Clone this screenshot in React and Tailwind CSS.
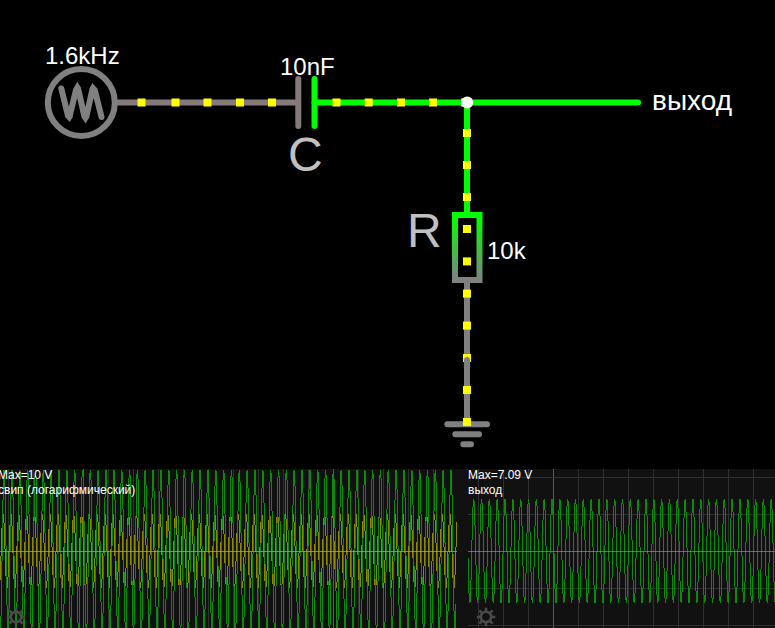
const GREEN = '#00ff00';
const GRAY = '#808080';
const WARM = '#857a7a';

const horizontalDots = [141.5, 175.5, 207.5, 240, 272, 336.5, 368.7, 401, 433];
const verticalDots = [133, 165, 197, 229, 261.4, 293.6, 325.6];

function Dot({ x, y }) {
  return <rect x={x - 4} y={y - 4} width="8" height="8" fill="#ffff00" />;
}

function Circuit() {
  return (
    <main className="relative h-[469px] overflow-hidden leading-none whitespace-nowrap">
      <svg width="775" height="469" viewBox="0 0 775 469" fill="none" strokeWidth="6" strokeLinecap="round" className="block max-w-none">
        <defs>
          <linearGradient id="drop" gradientUnits="userSpaceOnUse" x1="0" y1="212" x2="0" y2="280">
            <stop offset="0.08" stopColor={GREEN} />
            <stop offset="1" stopColor={GRAY} />
          </linearGradient>
        </defs>

        {/* sweep source */}
        <path d="M118 102.5H298" stroke={WARM} />
        <circle cx="81.3" cy="102.5" r="33.5" stroke={GRAY} />
        <path d="M61.3 88.5L67.8 115L69.7 116L76 90L78.4 90L84.3 116L86.5 116L92.5 89L95 91L101.5 117" stroke={GRAY} strokeLinejoin="round" />
        <path d="M64.6 116.5L69.8 122L73 116.5ZM73.4 88.5L77.3 81.7L81.5 88.5ZM81.3 117L85.6 123.5L89.5 117ZM89.5 89L92.3 83L98.3 89.5Z" fill={GRAY} />

        {/* capacitor */}
        <path d="M298.3 79V126" stroke={WARM} />
        <path d="M314.5 102.5H638" stroke={GREEN} />
        <path d="M314.5 79V126" stroke={GREEN} />

        {/* resistor */}
        <path d="M467 102.5V213" stroke={GREEN} />
        <path d="M467 281V358" stroke={GRAY} />
        <rect x="455" y="215" width="24.5" height="65" stroke="url(#drop)" />

        {horizontalDots.map((x) => <Dot key={x} x={x} y={102.5} />)}
        <Dot x={465} y={102.5} />
        {verticalDots.map((y) => <Dot key={y} x={467} y={y} />)}
        <circle cx="467.2" cy="102.5" r="6" fill="#ffffff" />

        {/* ground */}
        <Dot x={467} y={358} />
        <path d="M467 360V422M447.3 424.3H487M455.3 434.3H479M463.3 444.3H471" stroke={GRAY} />
        <Dot x={467} y={390} />
        <Dot x={467} y={422} />
      </svg>
      <span className="absolute left-[45px] top-[44px] text-2xl leading-none">1.6kHz</span>
      <span className="absolute left-[280px] top-[55px] text-2xl leading-none">10nF</span>
      <span className="absolute left-[487px] top-[239px] text-2xl leading-none">10k</span>
      <span className="absolute left-[652px] top-[87px] text-[28px] leading-none">выход</span>
      <span className="absolute left-[288px] top-[131px] text-5xl leading-none text-[#c0c0c0]">C</span>
      <span className="absolute left-[407px] top-[207px] text-5xl leading-none text-[#c0c0c0]">R</span>
    </main>
  );
}

/* One vertical bar per column, from the lowest to the highest sample in it. */
function trace(start, end, peak, period, amplitude) {
  const at = (x) => 82.5 - amplitude * Math.cos((2 * Math.PI * (x - peak)) / period);
  let d = '';
  for (let x = start; x < end; x += 1) {
    let lo = Infinity;
    let hi = -Infinity;
    for (let i = 0; i <= 8; i += 1) {
      const y = at(x + i / 8);
      lo = Math.min(lo, y);
      hi = Math.max(hi, y);
    }
    const top = Math.floor(lo);
    const height = Math.max(1, Math.floor(hi) - top);
    d += `M${x} ${top}h1v${height}h-1z`;
  }
  return d;
}

function Gear() {
  return (
    <svg width="20" height="20" viewBox="-10 -10 20 20" fill="none" stroke="#4a4a4a" className="block">
      <circle r="5.2" strokeWidth="2.6" />
      {[0, 45, 90, 135, 180, 225, 270, 315].map((a) => (
        <path key={a} d="M0 -5.5V-9.3" strokeWidth="2.6" transform={`rotate(${a})`} />
      ))}
    </svg>
  );
}

function Scope({ children, max, name, textClass, gearClass }) {
  return (
    <section className="relative flex h-[159px] flex-col justify-between bg-[#111111]">
      <div className="absolute inset-0 overflow-hidden">
        <svg width="1600" height="159" viewBox="0 0 1600 159" shapeRendering="crispEdges" className="block max-w-none">
          {children}
        </svg>
      </div>
      <div className={`z-10 -mt-px text-xs leading-[15px] whitespace-nowrap ${textClass}`}>
        <p>{max}</p>
        <p>{name}</p>
      </div>
      <button type="button" aria-label="⚙" className={`z-10 mb-px self-start ${gearClass}`}>
        <Gear />
      </button>
    </section>
  );
}

function VerticalGrid({ first, major, end }) {
  const lines = [];
  for (let x = first; x < end; x += 25) lines.push(x);
  return lines.map((x) => (
    <rect key={x} x={x} y="0" width="1" height="159" fill={(x - major) % 250 === 0 ? '#5a5a5a' : '#303030'} />
  ));
}

export default function App() {
  return (
    <div className="min-h-screen overflow-hidden bg-black font-['Liberation_Sans',Arial,sans-serif] text-white">
      <Circuit />
      <div className="grid grid-cols-[468fr_307fr]">
        <Scope max="Max=10 V" name="свип (логарифмический)" textClass="-ml-0.5" gearClass="ml-1.5">
          <VerticalGrid first={8} major={83} end={456} />
          <path d={trace(0, 457, 450, 7.84, 36.7)} fill="#8a8a00" />
          <path d={trace(0, 456, 451, 7.84, 81)} fill="#0c8a0c" />
          <rect x="0" y="82" width="457" height="1" fill="#a0a0a0" fillOpacity="0.75" />
        </Scope>
        <Scope max="Max=7.09 V" name="выход" textClass="ml-0" gearClass="ml-2">
          <VerticalGrid first={10} major={85} end={1600} />
          {[8, 45, 119, 156].map((y) => <rect key={y} x="0" y={y} width="1600" height="1" fill="#303030" />)}
          <path d={trace(0, 1600, 5.7, 7.83, 51.7)} fill="#0c8a0c" />
          <rect x="0" y="82" width="1600" height="1" fill="#a0a0a0" fillOpacity="0.6" />
        </Scope>
      </div>
    </div>
  );
}
